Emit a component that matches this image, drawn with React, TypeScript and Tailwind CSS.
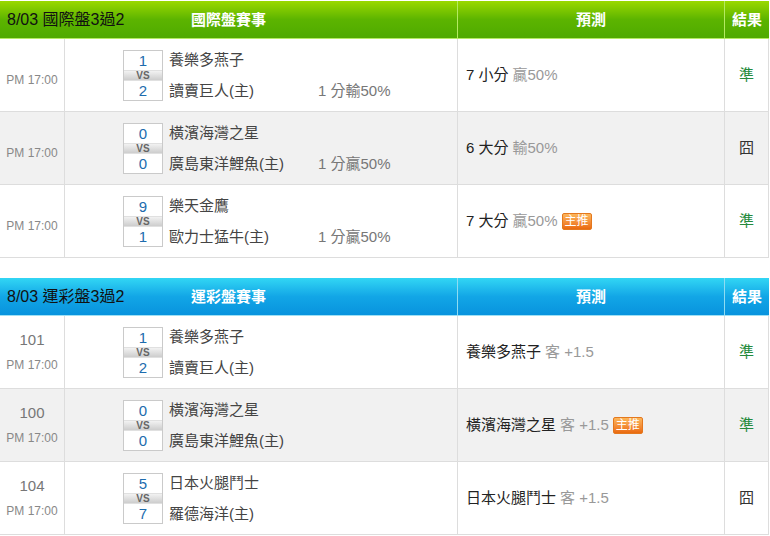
import React from "react";

type Row = {
  num?: string;
  s1: string;
  s2: string;
  t1: string;
  t2: string;
  hc?: string;
  pred: string;
  sub: string;
  badge?: boolean;
  result: string;
};

const t1Rows: Row[] = [
  { s1: "1", s2: "2", t1: "養樂多燕子", t2: "讀賣巨人(主)", hc: "1 分輸50%", pred: "7 小分", sub: "贏50%", result: "準" },
  { s1: "0", s2: "0", t1: "橫濱海灣之星", t2: "廣島東洋鯉魚(主)", hc: "1 分贏50%", pred: "6 大分", sub: "輸50%", result: "囧" },
  { s1: "9", s2: "1", t1: "樂天金鷹", t2: "歐力士猛牛(主)", hc: "1 分贏50%", pred: "7 大分", sub: "贏50%", badge: true, result: "準" },
];

const t2Rows: Row[] = [
  { num: "101", s1: "1", s2: "2", t1: "養樂多燕子", t2: "讀賣巨人(主)", pred: "養樂多燕子", sub: "客 +1.5", result: "準" },
  { num: "100", s1: "0", s2: "0", t1: "橫濱海灣之星", t2: "廣島東洋鯉魚(主)", pred: "橫濱海灣之星", sub: "客 +1.5", badge: true, result: "準" },
  { num: "104", s1: "5", s2: "7", t1: "日本火腿鬥士", t2: "羅德海洋(主)", pred: "日本火腿鬥士", sub: "客 +1.5", result: "囧" },
];

function Badge() {
  return (
    <span className="ml-[4px] inline-flex h-[17px] items-center rounded-[2px] border border-[#e4781e] bg-linear-to-b from-[#fcb65a] to-[#ea6a0c] px-[2px] text-[12px] leading-[15px] text-white">
      主推
    </span>
  );
}

function ScoreBox({ s1, s2 }: { s1: string; s2: string }) {
  return (
    <div className="flex w-[40px] flex-col border border-[#cacaca] bg-white">
      <div className="flex h-[19px] items-center justify-center text-[15px] leading-[19px] text-[#1d6cae]">{s1}</div>
      <div className="flex h-[11px] items-center justify-center border-y border-[#e0e0e0] bg-linear-to-b from-[#f2f2f2] to-[#cdcdcd] text-[10px] font-bold leading-[9px] text-[#666]">
        VS
      </div>
      <div className="flex h-[19px] items-center justify-center text-[15px] leading-[19px] text-[#1d6cae]">{s2}</div>
    </div>
  );
}

function Table({
  title,
  head,
  rows,
  blue,
  className,
}: {
  title: string;
  head: string;
  rows: Row[];
  blue?: boolean;
  className?: string;
}) {
  const headBg = blue
    ? "bg-linear-to-b from-[#32d6f4] via-[#12a6e6] to-[#0893de] border-b border-[#9fe0f4]"
    : "bg-linear-to-b from-[#9ad900] via-[#5cb400] to-[#4faa00] border-b border-[#b4ea62]";
  const sep = blue ? "border-[#8fdcf2]" : "border-[#b4ea62]";
  return (
    <div className={`w-[769px] ${className ?? ""}`}>
      <div className={`grid h-[38px] grid-cols-[458px_267px_44px] ${headBg}`}>
        <div className={`grid grid-cols-[1fr_auto_1fr] items-center border-r ${sep}`}>
          <span className="pl-[7px] text-[16px] leading-[20px] text-[#111]">{title}</span>
          <span className="text-[15px] font-bold leading-[20px] text-white">{head}</span>
          <span />
        </div>
        <div className={`flex items-center justify-center border-r ${sep} text-[15px] font-bold leading-[20px] text-white`}>預測</div>
        <div className="flex items-center justify-center text-[15px] font-bold leading-[20px] text-white">結果</div>
      </div>
      {rows.map((r, i) => (
        <div
          key={i}
          className={`grid h-[73px] grid-cols-[65px_393px_267px_44px] border-b border-[#dddddd] ${i === 1 ? "bg-[#f1f1f1]" : "bg-white"}`}
        >
          <div className="flex flex-col items-center justify-center border-r border-[#dddddd]">
            {r.num ? (
              <>
                <div className="mb-[8px] text-[15px] leading-[18px] text-[#777]">{r.num}</div>
                <div className="text-[12px] leading-[16px] text-[#888]">PM 17:00</div>
              </>
            ) : (
              <div className="mt-[9px] text-[12px] leading-[16px] text-[#888]">PM 17:00</div>
            )}
          </div>
          <div className="flex items-center border-r border-[#dddddd] pl-[58px]">
            <ScoreBox s1={r.s1} s2={r.s2} />
            <div className="ml-[6px] flex h-[51px] w-[149px] flex-col justify-between">
              <div className="text-[15px] leading-[20px] text-[#444]">{r.t1}</div>
              <div className="text-[15px] leading-[20px] text-[#444]">{r.t2}</div>
            </div>
            {r.hc && (
              <div className="flex h-[51px] flex-col justify-end">
                <div className="text-[15px] leading-[20px] text-[#777]">{r.hc}</div>
              </div>
            )}
          </div>
          <div className="flex items-center border-r border-[#dddddd] pl-[8px] text-[15px] leading-[20px]">
            <span className="text-[#222]">{r.pred}</span>
            <span className="ml-[4px] text-[#999]">{r.sub}</span>
            {r.badge && <Badge />}
          </div>
          <div className={`flex items-center justify-center border-r border-[#dddddd] text-[15px] leading-[20px] ${r.result === "準" ? "text-[#248a3c]" : "text-[#333]"}`}>
            {r.result}
          </div>
        </div>
      ))}
    </div>
  );
}

export default function App() {
  return (
    <div className="h-[536px] w-[770px] overflow-hidden bg-white pt-[1px] font-['Liberation_Sans','Noto_Sans_CJK_TC',sans-serif]">
      <Table title="8/03 國際盤3過2" head="國際盤賽事" rows={t1Rows} />
      <Table title="8/03 運彩盤3過2" head="運彩盤賽事" rows={t2Rows} blue className="mt-[20px]" />
    </div>
  );
}
